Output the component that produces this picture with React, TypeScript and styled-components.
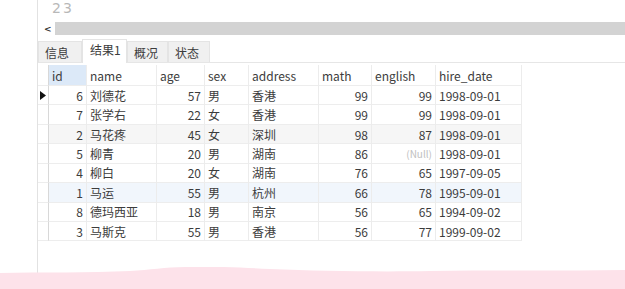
import React from "react";
import styled, { createGlobalStyle } from "styled-components";

const Global = createGlobalStyle`
  html, body { margin: 0; padding: 0; background: #fff; }
  body { width: 625px; height: 289px; overflow: hidden; font-family: "Noto Sans CJK SC", "Noto Sans", sans-serif; }
`;

const Page = styled.div`
  position: relative;
  width: 625px;
  height: 289px;
  display: flex;
  overflow: hidden;
  background: #fff;
`;

const Gutter = styled.div`
  width: 37px;
  flex: none;
  border-right: 1px solid #e2e2e2;
`;

const Main = styled.div`
  flex: 1;
  display: flex;
  flex-direction: column;
`;

const Editor = styled.div`
  height: 22px;
  padding-left: 14px;
  color: #b8b8b8;
  font-family: "DejaVu Sans", sans-serif;
  font-size: 14px;
  line-height: 16px;
  letter-spacing: 2px;
`;

const ScrollRow = styled.div`
  height: 13px;
  display: flex;
  align-items: stretch;
`;

const ScrollArrow = styled.div`
  width: 17px;
  color: #333;
  font-size: 9px;
  font-weight: bold;
  line-height: 14px;
  padding-left: 6px;
  box-sizing: border-box;
  font-family: "DejaVu Sans", sans-serif;
`;

const ScrollTrack = styled.div`
  flex: 1;
  background: #d3d3d3;
`;

const Tabs = styled.div`
  margin-top: 5px;
  height: 22px;
  display: flex;
  align-items: flex-end;
  border-bottom: 1px solid #e6e6e6;
`;

const Tab = styled.div<{ $active?: boolean; $w: number }>`
  width: ${(p) => p.$w}px;
  height: ${(p) => (p.$active ? 24 : 21)}px;
  box-sizing: border-box;
  background: ${(p) => (p.$active ? "#fff" : "#f0f0f0")};
  border: 1px solid #e4e4e4;
  border-bottom: none;
  margin-bottom: ${(p) => (p.$active ? -1 : 0)}px;
  font-size: 12px;
  color: #3c3c3c;
  display: flex;
  align-items: center;
  padding-left: ${(p) => (p.$active ? 7 : 6)}px;
  padding-bottom: ${(p) => (p.$active ? 4 : 0)}px;
`;

const Grid = styled.div`
  margin-top: 2px;
  display: grid;
  grid-template-columns: 11px 38px 70px 48px 44px 70px 53px 64px 86px;
  grid-template-rows: 21px repeat(8, 19.43px);
  width: max-content;
  font-size: 12px;
  color: #3c3c3c;
`;

const Cell = styled.div<{ $right?: boolean; $hl?: boolean; $bg?: string; $null?: boolean }>`
  box-sizing: border-box;
  border-right: 1px solid #ececec;
  border-bottom: 1px solid #ededed;
  background: ${(p) => (p.$hl ? "#dce9f8" : p.$bg || "#fff")};
  display: flex;
  align-items: center;
  justify-content: ${(p) => (p.$right ? "flex-end" : "flex-start")};
  padding: 0 3px 0 3px;
  color: ${(p) => (p.$null ? "#c0c0c0" : "#3c3c3c")};
  font-size: ${(p) => (p.$null ? 10 : 12)}px;
  white-space: nowrap;
  overflow: hidden;
`;

const RowHead = styled.div`
  box-sizing: border-box;
  border-right: 1px solid #d8d8d8;
  border-bottom: 1px solid #ededed;
  display: flex;
  align-items: center;
  justify-content: center;
`;

const Wave = styled.svg`
  position: absolute;
  left: 0;
  bottom: 0;
  width: 625px;
  height: 22px;
`;

const cols = ["id", "name", "age", "sex", "address", "math", "english", "hire_date"];
const right = [true, false, true, false, false, true, true, false];

const rows: (string | null)[][] = [
  ["6", "刘德花", "57", "男", "香港", "99", "99", "1998-09-01"],
  ["7", "张学右", "22", "女", "香港", "99", "99", "1998-09-01"],
  ["2", "马花疼", "45", "女", "深圳", "98", "87", "1998-09-01"],
  ["5", "柳青", "20", "男", "湖南", "86", null, "1998-09-01"],
  ["4", "柳白", "20", "女", "湖南", "76", "65", "1997-09-05"],
  ["1", "马运", "55", "男", "杭州", "66", "78", "1995-09-01"],
  ["8", "德玛西亚", "18", "男", "南京", "56", "65", "1994-09-02"],
  ["3", "马斯克", "55", "男", "香港", "56", "77", "1999-09-02"],
];

const rowBg = (i: number) => (i === 2 ? "#f6f6f6" : i === 5 ? "#f1f6fc" : "#fff");

export default function App() {
  return (
    <>
      <Global />
      <Page>
        <Gutter />
        <Main>
          <Editor>23</Editor>
          <ScrollRow>
            <ScrollArrow>&lt;</ScrollArrow>
            <ScrollTrack />
          </ScrollRow>
          <Tabs>
            <Tab $w={44}>信息</Tab>
            <Tab $w={45} $active>结果1</Tab>
            <Tab $w={41}>概况</Tab>
            <Tab $w={42}>状态</Tab>
          </Tabs>
          <Grid>
            <RowHead />
            {cols.map((c, i) => (
              <Cell key={c} $hl={i === 0}>
                {c}
              </Cell>
            ))}
            {rows.map((r, ri) => (
              <React.Fragment key={ri}>
                <RowHead>
                  {ri === 0 && (
                    <svg width="6" height="9" viewBox="0 0 6 9">
                      <path d="M0 0 L6 4.5 L0 9 Z" fill="#111" />
                    </svg>
                  )}
                </RowHead>
                {r.map((v, ci) => (
                  <Cell key={ci} $right={right[ci]} $bg={rowBg(ri)} $null={v === null}>
                    {v === null ? "(Null)" : v}
                  </Cell>
                ))}
              </React.Fragment>
            ))}
          </Grid>
        </Main>
        <Wave viewBox="0 0 625 22" preserveAspectRatio="none">
          <path
            d="M0 6 C40 5 90 6 130 4 C150 3 165 0 185 0 C220 -1 245 1 270 2 C320 4 380 5 430 4 C500 3 560 4 625 3 L625 22 L0 22 Z"
            fill="#fde2ea"
          />
        </Wave>
      </Page>
    </>
  );
}
